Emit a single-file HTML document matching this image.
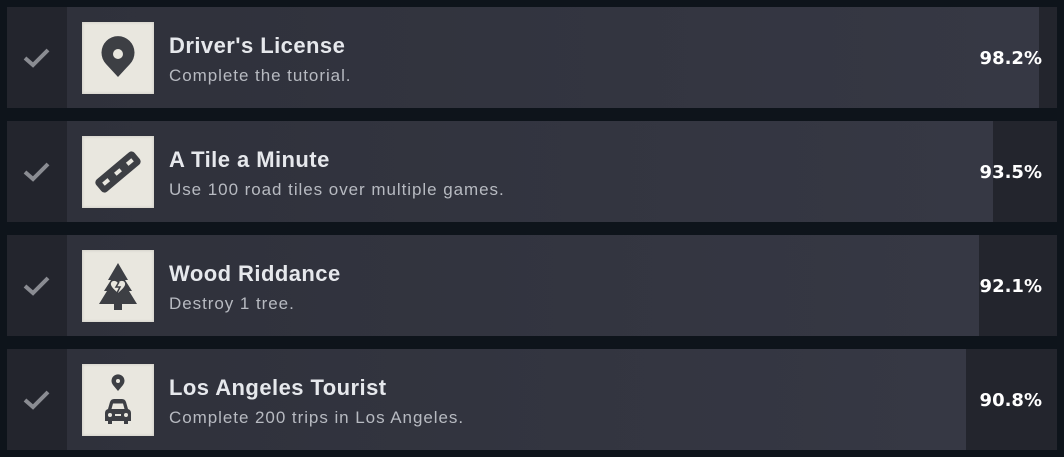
<!DOCTYPE html>
<html><head><style>
*{margin:0;padding:0;box-sizing:border-box}
body{width:1064px;height:457px;background:#0e141b;font-family:"Liberation Sans","DejaVu Sans",sans-serif;overflow:hidden;position:relative}
.row{position:absolute;left:7px;width:1050px;height:101px;background:#23252d}
.bar{position:absolute;left:60px;top:0;height:101px;background:linear-gradient(90deg,#2f313b,#363844)}
.chk{position:absolute;left:0;top:0;width:60px;height:101px;background:#23252d}
.chk svg{position:absolute;left:16px;top:40px}
.ico{position:absolute;left:75px;top:15px;width:72px;height:72px;background:#e9e7df;box-shadow:inset 0 0 3px rgba(0,0,0,.15)}
.t{position:absolute;left:162px;top:26px;color:#e6e8ec;font-size:22px;font-weight:bold;letter-spacing:0.45px}
.s{position:absolute;left:162px;top:59px;color:#b7bac1;font-size:17px;letter-spacing:0.95px}
.p{position:absolute;right:15px;top:41px;color:#fff;font-size:18px;font-weight:bold;font-family:"DejaVu Sans",sans-serif}
</style></head><body>

<div class="row" style="top:7px"><div class="bar" style="width:972px"></div><div class="chk"><svg width="28" height="22" viewBox="0 0 28 22"><path d="M2 11 L10 18 L25 3" stroke="#8a8c92" stroke-width="4" fill="none"/></svg></div>
<div class="ico"><svg width="72" height="72" viewBox="0 0 72 72"><path d="M36 55 L24 42 A16.5 16.5 0 1 1 48 42 Z" fill="#3d3f44"/><circle cx="36" cy="32" r="5" fill="#e9e7df"/></svg></div>
<div class="t">Driver's License</div><div class="s">Complete the tutorial.</div><div class="p">98.2%</div></div>

<div class="row" style="top:121px"><div class="bar" style="width:926px"></div><div class="chk"><svg width="28" height="22" viewBox="0 0 28 22"><path d="M2 11 L10 18 L25 3" stroke="#8a8c92" stroke-width="4" fill="none"/></svg></div>
<div class="ico"><svg width="72" height="72" viewBox="0 0 72 72"><g transform="rotate(-40 36 36)"><rect x="11" y="28" width="50" height="16" rx="4" fill="#3d3f44"/><rect x="17" y="34" width="7" height="4" fill="#e9e7df"/><rect x="32.5" y="34" width="7" height="4" fill="#e9e7df"/><rect x="48" y="34" width="7" height="4" fill="#e9e7df"/></g></svg></div>
<div class="t">A Tile a Minute</div><div class="s">Use 100 road tiles over multiple games.</div><div class="p">93.5%</div></div>

<div class="row" style="top:235px"><div class="bar" style="width:912px"></div><div class="chk"><svg width="28" height="22" viewBox="0 0 28 22"><path d="M2 11 L10 18 L25 3" stroke="#8a8c92" stroke-width="4" fill="none"/></svg></div>
<div class="ico"><svg width="72" height="72" viewBox="0 0 72 72"><path d="M36 13 L46 30 L43 30 L50 41 L47 41 L55 54 L40 54 L40 60 L32 60 L32 54 L17 54 L25 41 L22 41 L29 30 L26 30 Z" fill="#3d3f44"/><path d="M36 33 C33 29 28 31 29 35 C30 38 34 41 36 43 C38 41 42 38 43 35 C44 31 39 29 36 33 Z" fill="#e9e7df"/><path d="M37 32 L34 37 L38 37 L35 43" stroke="#3d3f44" stroke-width="1.5" fill="none"/></svg></div>
<div class="t">Wood Riddance</div><div class="s">Destroy 1 tree.</div><div class="p">92.1%</div></div>

<div class="row" style="top:349px"><div class="bar" style="width:899px"></div><div class="chk"><svg width="28" height="22" viewBox="0 0 28 22"><path d="M2 11 L10 18 L25 3" stroke="#8a8c92" stroke-width="4" fill="none"/></svg></div>
<div class="ico"><svg width="72" height="72" viewBox="0 0 72 72"><path d="M36 27 L31 21 A6.5 6.5 0 1 1 41 21 Z" fill="#3d3f44"/><circle cx="36" cy="17" r="2" fill="#e9e7df"/><path d="M26 45 L28 38 Q29 35 32 35 L40 35 Q43 35 44 38 L46 45 Q49 46 49 49 L49 57 L46 57 L46 60 L42 60 L42 57 L30 57 L30 60 L26 60 L26 57 L23 57 L23 49 Q23 46 26 45 Z" fill="#3d3f44"/><path d="M29.5 45 L31 39.5 L41 39.5 L42.5 45 Z" fill="#e9e7df"/><circle cx="28" cy="51" r="2" fill="#e9e7df"/><circle cx="44" cy="51" r="2" fill="#e9e7df"/><rect x="33" y="50" width="6" height="2" fill="#e9e7df"/></svg></div>
<div class="t">Los Angeles Tourist</div><div class="s">Complete 200 trips in Los Angeles.</div><div class="p">90.8%</div></div>

</body></html>
